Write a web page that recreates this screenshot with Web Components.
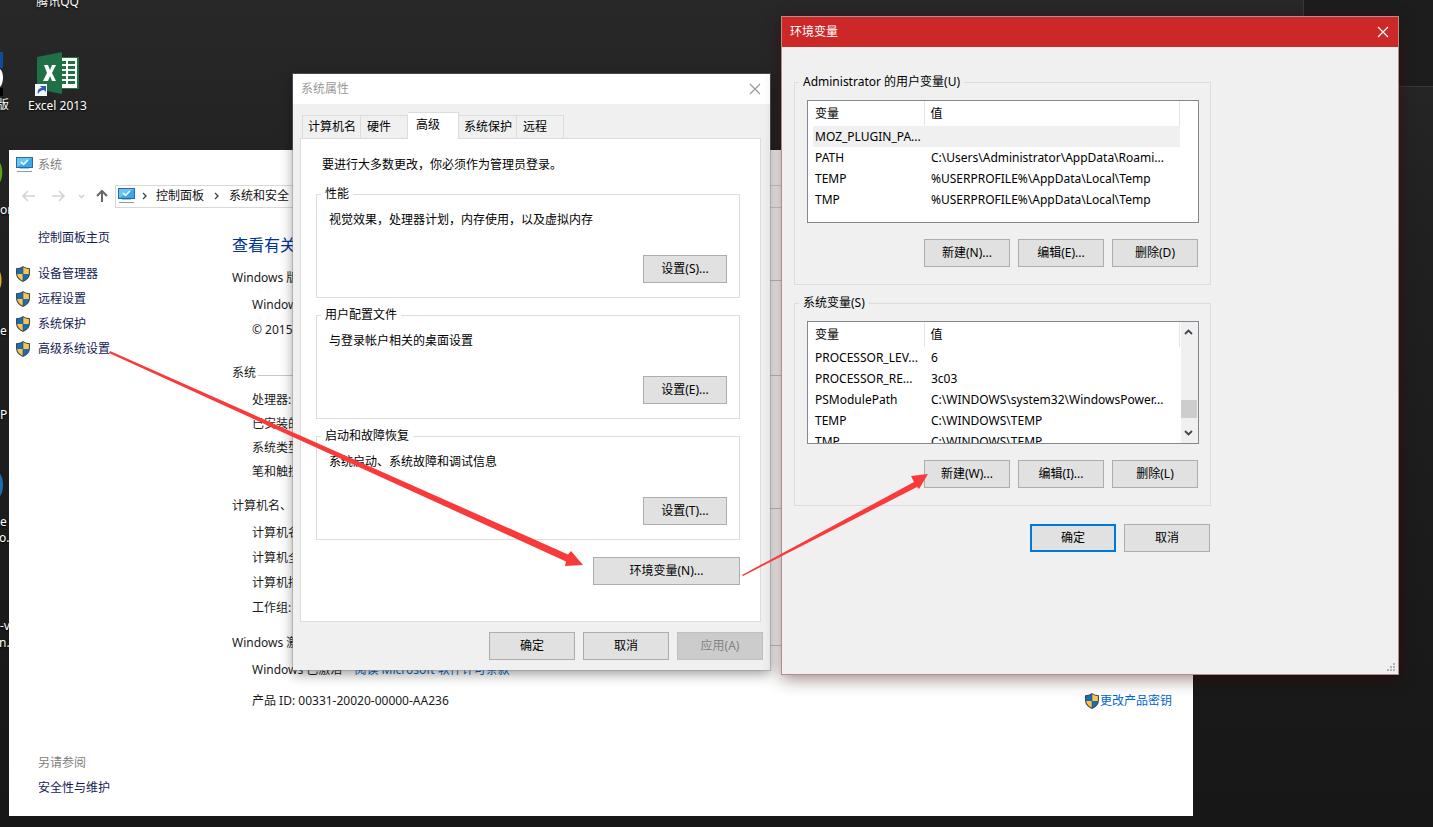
<!DOCTYPE html>
<html lang="zh-CN">
<head>
<meta charset="utf-8">
<title>环境变量</title>
<style>
  html, body { height: 100%; margin: 0; }
  body {
    overflow: hidden;
    font: 12px/18px "Noto Sans", "Noto Sans CJK SC", sans-serif;
    color: #000;
    background: #1b1b1b;
  }
</style>
</head>
<body>
<win-desktop></win-desktop>

<script>
class Base extends HTMLElement {
  constructor() {
    super();
    this.attachShadow({ mode: "open" }).innerHTML =
      "<style>*{box-sizing:border-box}" + this.css() + "</style>" + this.html();
  }
  css() { return ""; }
  html() { return "<slot></slot>"; }
}

customElements.define("uac-shield", class extends Base {
  css() { return ":host{display:block;width:14px;height:16px;flex:none}svg{display:block}"; }
  html() {
    return `<svg width="14" height="16" viewBox="0 0 14 16" aria-hidden="true">
      <path d="M7 0C5 1.500 2.500 2.200 0 2.200V7c0 4.500 3 7.300 7 9 4-1.700 7-4.500 7-9V2.200C11.500 2.200 9 1.500 7 0z" fill="#3c4a54"/>
      <path d="M6.700 1.300C5 2.400 3 3 1.100 3.100V8h5.600z" fill="#1b6bb5"/>
      <path d="M7.300 1.300C9 2.400 11 3 12.900 3.100V8H7.300z" fill="#f7c64b"/>
      <path d="M1.200 8h5.500v6.800C3.800 13.400 1.500 11.300 1.200 8z" fill="#f7c64b"/>
      <path d="M12.800 8H7.300v6.800c2.900-1.400 5.200-3.500 5.500-6.800z" fill="#1b6bb5"/>
    </svg>`;
  }
});

customElements.define("pc-icon", class extends Base {
  css() { return ":host{display:block;width:17px;height:16px;flex:none}svg{display:block}"; }
  html() {
    return `<svg width="17" height="16" viewBox="0 0 17 16" aria-hidden="true">
      <rect x=".5" y=".5" width="16" height="10" fill="#38a8ea" stroke="#2b6c9c"/>
      <path d="M1 1h15L1 10z" fill="#6cc4f4"/>
      <path d="M5 5l2.500 2.500L12 3" fill="none" stroke="#fff" stroke-width="1.500"/>
      <path d="M4 11.500h9" stroke="#a9c4d6"/><path d="M1 14.500h15" stroke="#8a9aa6"/>
    </svg>`;
  }
});

customElements.define("close-button", class extends Base {
  css() {
    return `:host{display:block}
      button{display:block;border:0;padding:0;background:none;color:inherit;width:12px;height:12px}
      svg{display:block}`;
  }
  html() {
    return `<button aria-label="关闭"><svg width="12" height="12" viewBox="0 0 12 12">
      <path d="M1 1l10 10M11 1L1 11" stroke="currentColor" stroke-width="1.200" fill="none"/></svg></button>`;
  }
});

customElements.define("win-button", class extends Base {
  css() {
    return `:host{display:block;width:86px;height:28px;flex:none}
      button{display:block;width:100%;height:100%;padding:0;font:inherit;color:#000;
        background:#e1e1e1;border:1px solid #adadad}
      :host([primary]) button{border:2px solid #0078d7}
      button:disabled{background:#ccc;border-color:#bfbfbf;color:#838383}`;
  }
  html() { return `<button ${this.hasAttribute("disabled") ? "disabled" : ""}><slot></slot></button>`; }
});

customElements.define("group-box", class extends Base {
  css() {
    return `:host{display:block}
      fieldset{margin:0;min-width:0;border:1px solid #dcdcdc;padding:var(--group-padding)}
      legend{padding:0 4px;line-height:18px}
      .body{padding-left:8px}`;
  }
  html() {
    return `<fieldset><legend>${this.getAttribute("label")}</legend><div class="body"><slot></slot></div></fieldset>`;
  }
});

customElements.define("variable-list", class extends Base {
  css() {
    return `:host{display:flex;height:123px;border:1px solid #828790;background:#fff;overflow:hidden}
      table{border-collapse:collapse;table-layout:fixed;width:372px;flex:none;height:max-content}
      th,td{padding:0 0 0 7px;height:21px;line-height:20px;font-weight:normal;text-align:left;white-space:nowrap}
      th{height:25px;line-height:24px;border-right:1px solid #e5e5e5}
      .name{width:116px}
      td+td{padding-left:7px}
      th+th{padding-left:6px}
      .current{background:linear-gradient(90deg,#fff 5px,#f0f0f0 5px)}
      .bar{display:flex;flex-direction:column;justify-content:space-between;flex:1;margin-left:1px;background:#f0f0f0}
      .bar button{display:grid;place-items:center;height:20px;padding:0 2px 0 0;border:0;background:none}
      .thumb{height:18px;margin:52px 1px 0 0;background:#cdcdcd}`;
  }
  html() {
    const rows = JSON.parse(this.getAttribute("rows"));
    const body = rows.map(([n, v], i) =>
      `<tr class="${this.hasAttribute("highlight") && i === 0 ? "current" : ""}"><td>${n}</td><td>${v}</td></tr>`).join("");
    const bar = this.hasAttribute("scroll") ? `<div class="bar">
      <button aria-label="向上滚动"><svg width="9" height="6"><path d="M1 5l3.500-3.500L8 5" fill="none" stroke="#444" stroke-width="1.800"/></svg></button>
      <div class="thumb"></div>
      <button aria-label="向下滚动"><svg width="9" height="6"><path d="M1 1l3.500 3.500L8 1" fill="none" stroke="#444" stroke-width="1.800"/></svg></button></div>` : "";
    return `<table><thead><tr><th class="name">变量</th><th>值</th></tr></thead><tbody>${body}</tbody></table>${bar}`;
  }
});

customElements.define("info-section", class extends Base {
  css() {
    return `:host{display:block;margin-top:10px}
      h2{display:flex;align-items:center;margin:0;font:inherit;line-height:24px;white-space:nowrap}
      h2::after{content:"";flex:1;height:1px;margin:4px 0 0 2px;background:#c8c8c8}
      .rows{padding:var(--gap,2px) 0 0 20px;line-height:var(--row,25px)}`;
  }
  html() { return `<h2>${this.getAttribute("label")}</h2><div class="rows"><slot></slot></div>`; }
});

customElements.define("system-window", class extends Base {
  css() {
    return `:host{display:flex;flex-direction:column;background:#fff;color:#1a1a1a}
      header{display:flex;align-items:center;gap:5px;height:28px;padding:2px 0 0 7px;color:#808080}
      nav{display:flex;align-items:center;height:36px;padding:0 20px 0 13px}
      nav>svg{flex:none}
      .address{display:flex;align-items:center;flex:1;height:23px;margin-left:6px;padding-left:2px;
        border:1px solid #d9d9d9;white-space:nowrap}
      .address svg{margin:0 8px 0 7px;flex:none}
      .address a+svg{margin:0 9px 0 10px}
      a{text-decoration:none;color:#0066cc}
      .address a{color:#111}
      .columns{display:grid;grid-template-columns:223px 1fr;flex:1}
      aside{display:flex;flex-direction:column;padding:11px 0 16px 7px;line-height:25px}
      aside a{display:flex;align-items:center;gap:8px;color:#151c55}
      aside a.plain,aside span{padding-left:22px}
      .tasks{margin:11px 0 auto}
      aside span{color:#808080}
      main{padding:19px 21px 0 0;min-width:0}
      h1{margin:0;font-size:16px;font-weight:normal;line-height:24px;color:#003399}
      .first{margin-top:9px}
      .spec{margin-top:19px;--row:24px;--gap:3px}
      .activation{margin-top:11px}
      .product{display:flex;justify-content:space-between;margin-top:6px}
      .product a{display:flex;align-items:center;gap:1px}
      .terms{margin-left:12px}`;
  }
  html() {
    const chevron = `<svg width="6" height="8"><path d="M1 1l3 3-3 3" fill="none" stroke="#444" stroke-width="1.400"/></svg>`;
    const task = t => `<a href="#"><uac-shield></uac-shield>${t}</a>`;
    return `<header><pc-icon></pc-icon><span>系统</span></header>
      <nav>
        <svg width="87" height="16" viewBox="0 0 87 16" fill="none" stroke="#d4d4d4" stroke-width="1.600">
          <path d="M13 8H1M6 3L1 8l5 5M30 8h12M37 3l5 5-5 5"/><path d="M57 7l2.500 2.500L62 7"/>
          <path d="M80 14V3M75 8l5-5 5 5" stroke="#666" stroke-width="2"/>
        </svg>
        <div class="address"><pc-icon></pc-icon>${chevron}<a href="#">控制面板</a>${chevron}<a href="#">系统和安全</a></div>
      </nav>
      <div class="columns">
        <aside>
          <a class="plain" href="#">控制面板主页</a>
          <div class="tasks">${["设备管理器", "远程设置", "系统保护", "高级系统设置"].map(task).join("")}</div>
          <span>另请参阅</span>
          <a class="plain" href="#">安全性与维护</a>
        </aside>
        <main>
          <h1>查看有关</h1>
          <info-section class="first" label="Windows 版"><div>Windows</div><div>© 2015</div></info-section>
          <info-section class="spec" label="系统"><div>处理器:</div><div>已安装的</div><div>系统类型</div><div>笔和触控</div></info-section>
          <info-section label="计算机名、"><div>计算机名</div><div>计算机全</div><div>计算机描</div><div>工作组:</div></info-section>
          <info-section class="activation" label="Windows 激">
            <div>Windows 已激活<a class="terms" href="#">阅读 Microsoft 软件许可条款</a></div>
            <div class="product"><span>产品 ID: 00331-20020-00000-AA236</span><a href="#"><uac-shield></uac-shield>更改产品密钥</a></div>
          </info-section>
        </main>
      </div>`;
  }
});

customElements.define("properties-dialog", class extends Base {
  css() {
    return `:host{display:block;background:#f0f0f0;--group-padding:8px 12px 14px 4px}
      header{display:flex;align-items:center;justify-content:space-between;height:30px;padding:0 9px 0 8px;background:#fff;color:#999}
      .tabs{display:flex;align-items:flex-end;height:34px;padding-left:9px}
      .tabs button{height:23px;padding:0 4px 0 5px;border:1px solid #dcdcdc;border-width:1px 1px 0 0;background:#f0f0f0;
        font:inherit;text-align:left;white-space:nowrap}
      .tabs button:first-child{border-left-width:1px}
      .tabs .wide{padding:0 16px 0 6px}
      .tabs .selected{height:27px;margin-bottom:-1px;padding:0 18px 2px 8px;background:#fff;position:relative}
      .panel{margin:0 9px 0 7px;padding:17px 20px 36px 15px;border:1px solid #dcdcdc;background:#fff}
      .notice{margin:0 0 11px;padding-left:6px}
      group-box{margin-bottom:8px}
      group-box p{margin:0 0 26px}
      group-box win-button{width:84px;margin-left:auto}
      .env{width:147px;margin:17px 0 0 auto}
      footer{display:flex;justify-content:flex-end;gap:8px;padding:10px 7px}`;
  }
  html() {
    const box = (l, t, k) => `<group-box label="${l}"><p>${t}</p><win-button>设置(${k})...</win-button></group-box>`;
    return `<header><span>系统属性</span><close-button></close-button></header>
      <div class="tabs" role="tablist">
        <button role="tab">计算机名</button><button role="tab" class="wide">硬件</button>
        <button role="tab" class="selected" aria-selected="true">高级</button>
        <button role="tab">系统保护</button><button role="tab" class="wide">远程</button>
      </div>
      <div class="panel">
        <p class="notice">要进行大多数更改，你必须作为管理员登录。</p>
        ${box("性能", "视觉效果，处理器计划，内存使用，以及虚拟内存", "S")}
        ${box("用户配置文件", "与登录帐户相关的桌面设置", "E")}
        ${box("启动和故障恢复", "系统启动、系统故障和调试信息", "T")}
        <win-button class="env">环境变量(N)...</win-button>
      </div>
      <footer><win-button>确定</win-button><win-button>取消</win-button><win-button disabled>应用(A)</win-button></footer>`;
  }
});

customElements.define("environment-dialog", class extends Base {
  css() {
    return `:host{display:block;background:#f0f0f0;border:1px solid #b98a8d;--group-padding:9px 11px 17px 4px}
      header{display:flex;align-items:center;justify-content:space-between;height:30px;padding:0 9px 0 8px;background:#cc2828;color:#fff}
      .content{max-width:429px;padding:26px 0 108px 12px}
      group-box{margin-bottom:9px}
      .buttons{display:flex;justify-content:flex-end;gap:8px;margin-top:16px;padding-right:1px}
      .confirm{margin-top:18px}
      .grip{display:block;margin:0 2px 2px auto}`;
  }
  html() {
    const buttons = (a, b, c) => `<div class="buttons"><win-button>新建(${a})...</win-button><win-button>编辑(${b})...</win-button><win-button>删除(${c})</win-button></div>`;
    const user = [["MOZ_PLUGIN_PA...", ""], ["PATH", "C:\\Users\\Administrator\\AppData\\Roami..."],
      ["TEMP", "%USERPROFILE%\\AppData\\Local\\Temp"], ["TMP", "%USERPROFILE%\\AppData\\Local\\Temp"]];
    const system = [["PROCESSOR_LEV...", "6"], ["PROCESSOR_RE...", "3c03"],
      ["PSModulePath", "C:\\WINDOWS\\system32\\WindowsPower..."], ["TEMP", "C:\\WINDOWS\\TEMP"], ["TMP", "C:\\WINDOWS\\TEMP"]];
    return `<header><span>环境变量</span><close-button></close-button></header>
      <div class="content">
        <group-box label="Administrator 的用户变量(U)"><variable-list highlight rows='${JSON.stringify(user)}'></variable-list>${buttons("N", "E", "D")}</group-box>
        <group-box label="系统变量(S)"><variable-list scroll rows='${JSON.stringify(system)}'></variable-list>${buttons("W", "I", "L")}</group-box>
        <div class="buttons confirm"><win-button primary>确定</win-button><win-button>取消</win-button></div>
      </div>
      <svg class="grip" width="12" height="12" fill="#b4b4b4"><path d="M9 3h2v2H9zM6 6h2v2H6zM9 6h2v2H9zM3 9h2v2H3zM6 9h2v2H6zM9 9h2v2H9z"/></svg>`;
  }
});

customElements.define("win-desktop", class extends Base {
  css() {
    return `:host{display:block;position:relative;height:100%;overflow:hidden;
        background:linear-gradient(#282828,#202020 30%,#171717)}
      :host>*{position:absolute}
      .tile{left:1303px;right:0;top:0;height:87px;border:1px solid #383838;border-width:0 0 1px 1px;background:#1d1d1d}
      .label{color:#fff;white-space:nowrap;text-shadow:0 1px 2px #000}
      .qq{left:27px;top:-7px;width:61px;text-align:center}
      .excel{left:27px;top:52px;width:61px;text-align:center}
      .excel svg{display:block;margin:0 auto}
      .edge{left:0;top:0}
      system-window{left:9px;right:240px;top:150px;bottom:11px}
      properties-dialog{left:293px;top:74px;width:477px;box-shadow:0 0 0 1px #8886,0 4px 12px #0006}
      environment-dialog{left:781px;right:34px;top:16px;box-shadow:0 4px 16px #3007}
      .arrows{left:0;top:0;pointer-events:none}`;
  }
  html() {
    const cut = [["版", -3, 96], ["or", 0, 201], ["e", 0, 322], ["P", 0, 406], ["e", 0, 513], ["o...", -1, 529], ["-v", 0, 617], ["n...", -1, 634]];
    return `<div class="tile"></div>
      <svg class="edge" width="9" height="827" aria-hidden="true">
        <path d="M0 52h3v16H0z" fill="#0b4c9b"/><path d="M0 69c4 3 4 14 0 18z" fill="#fff"/><path d="M0 88h3v8H0z" fill="#000"/>
        <path d="M0 163c3 4 3 15 0 19z" fill="#58a618"/><path d="M0 272c2 4 2 12 0 16z" fill="#e5a72c"/><path d="M0 474c4 4 4 18 0 22z" fill="#1b6fb0"/>
      </svg>
      ${cut.map(([t, x, y]) => `<span class="label" style="left:${x}px;top:${y}px">${t}</span>`).join("")}
      <div class="label qq">腾讯QQ</div>
      <div class="label excel">
        <svg width="46" height="45" viewBox="0 0 46 45" aria-hidden="true">
          <path d="M26 5h18v32H26z" fill="#207245"/>
          <path d="M27 6h15v30H27z" fill="#fff"/>
          <path d="M26 9h5v3h-5zM26 14h5v3h-5zM26 19h5v3h-5zM26 24h5v3h-5zM26 29h5v3h-5zM33 9h7v3h-7zM33 14h7v3h-7zM33 19h7v3h-7zM33 24h7v3h-7zM33 29h7v3h-7z" fill="#207245"/>
          <path d="M2 5l25-5v42L2 37z" fill="#1f7145"/>
          <path d="M9 13h4l2 5 2-5h4l-4 8 4 8h-4l-2-5-2 5H8l4-8z" fill="#fff"/>
          <path d="M0 32h12v12H0z" fill="#f4f6fa"/>
          <path d="M3 42c-1-4 1-6 4-6l-2-2h6v6l-2-2c-3 0-4 1-6 4z" fill="#2f5ea8"/>
        </svg>Excel 2013
      </div>
      <system-window></system-window>
      <properties-dialog></properties-dialog>
      <environment-dialog></environment-dialog>
      <svg class="arrows" width="960" height="620" aria-hidden="true" fill="#f93a3a">
        <path d="M110 351L568 554.500 571 551 583 565 565 566 566 561.500 109 353z"/>
        <path d="M742 575L914 482 911 476 928 474 919 489 917 487 743 576z"/>
      </svg>`;
  }
});
</script>
</body>
</html>
